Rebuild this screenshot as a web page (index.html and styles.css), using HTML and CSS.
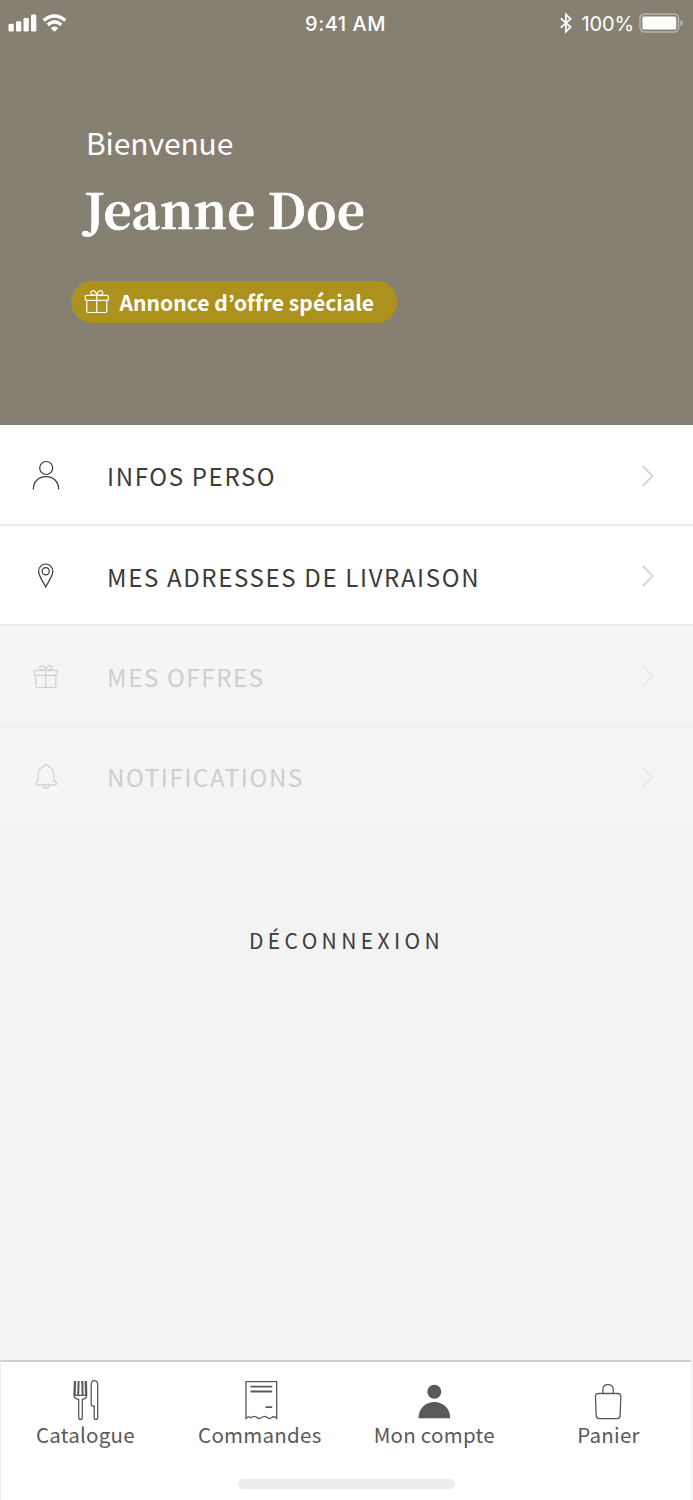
FILE: index.html
```html
<!DOCTYPE html>
<html lang="fr">
<head>
<meta charset="utf-8">
<title>Mon compte</title>
<link rel="stylesheet" href="styles.css">
</head>
<body>
<svg width="0" height="0" class="defs" aria-hidden="true">
  <symbol id="gift" viewBox="0 0 26 26">
    <rect x="1.3" y="6.4" width="23" height="5" rx="1.2"/>
    <path d="M2.8 11.4V22.3q0 1.2 1.2 1.2H21.6q1.2 0 1.2-1.2V11.4M12.8 6.4V23.5M12.8 6.2C10.6 6.5 7 6.2 6.7 3.9C6.6 2.2 8.4 1.2 10 1.9C11.7 2.6 12.5 4.5 12.8 6.2C13.1 4.5 13.9 2.6 15.6 1.9C17.2 1.2 19 2.2 18.9 3.9C18.6 6.2 15 6.5 12.8 6.2"/>
  </symbol>
  <symbol id="chevron" viewBox="0 0 14 24"><path d="M1.8 2L11.500 12L1.800 22"/></symbol>
</svg>
<main class="screen">
  <header class="hero">
    <div class="status">
      <div class="status-left">
        <svg width="60" height="20" viewBox="0 0 60 20" fill="#fff">
          <rect x="0.500" y="10.700" width="5.300" height="7.800" rx="1.300"/><rect x="8" y="8.200" width="5.300" height="10.300" rx="1.300"/><rect x="15.500" y="5" width="5.300" height="13.500" rx="1.300"/><rect x="23" y="1.500" width="5.300" height="17" rx="1.300"/>
          <g fill="none" stroke="#fff" stroke-width="3.500"><path d="M35.700 7.500Q46.500 -1.400 57.300 7.500"/><path d="M39.700 11.900Q46.500 5.900 53.300 11.900"/></g>
          <path d="M42.600 15Q46.500 11.800 50.400 15L46.500 18.700Z"/>
        </svg>
      </div>
      <div class="clock">9:41 AM</div>
      <div class="status-right">
        <svg width="14" height="22" viewBox="0 0 14 22" fill="none" stroke="#fff" stroke-width="1.700"><path d="M1.800 6.300L11.600 15L6.900 19.700V2.300L11.600 7L1.800 15.700"/></svg>
        <span class="percent">100%</span>
        <svg width="46" height="20" viewBox="0 0 46 20"><rect x="1" y="1" width="38.500" height="18" rx="4.800" fill="none" stroke="#b9b5ad" stroke-width="1.600"/><rect x="3.400" y="3.400" width="33.800" height="13.200" rx="1.600" fill="#fff"/><path d="M41.400 6.800Q44 7.800 44 10Q44 12.200 41.400 13.200Z" fill="#b9b5ad"/></svg>
      </div>
    </div>
    <div class="greeting">Bienvenue</div>
    <h1 class="name">Jeanne Doe</h1>
    <div class="pill"><svg class="pill-icon"><use href="#gift"/></svg><span>Annonce d’offre spéciale</span></div>
  </header>
  <nav class="menu">
    <a class="row">
      <svg class="row-icon" viewBox="0 0 30 32"><circle cx="15.200" cy="8" r="6.500"/><path d="M2.300 29.500C2.300 21.300 8 16.700 15 16.700S27.700 21.300 27.700 29.500"/></svg>
      <span class="label">INFOS PERSO</span><svg class="chevron"><use href="#chevron"/></svg>
    </a>
    <a class="row">
      <svg class="row-icon" viewBox="0 0 30 32"><path d="M14.700 27C12 21.500 7.600 16.500 7.600 11.100A7.100 7.100 0 0 1 21.800 11.100C21.800 16.500 17.400 21.500 14.700 27Z"/><circle cx="14.700" cy="11.300" r="3.600"/></svg>
      <span class="label">MES ADRESSES DE LIVRAISON</span><svg class="chevron"><use href="#chevron"/></svg>
    </a>
    <a class="row disabled">
      <svg class="row-icon gift-icon"><use href="#gift"/></svg>
      <span class="label">MES OFFRES</span><svg class="chevron"><use href="#chevron"/></svg>
    </a>
    <a class="row disabled">
      <svg class="row-icon" viewBox="0 0 30 32"><path d="M6.200 23.800H24Q25.700 23.800 25.700 22.500Q25.500 21.600 23.300 20L22.800 18.500V13Q22.500 7.200 17.200 5.500V5Q17 3.600 15 3.600T12.800 5V5.500Q7.500 7.200 7.200 13V18.500L6.700 20Q4.500 21.600 4.300 22.500Q4.300 23.800 6.200 23.800ZM12 24Q12 27.300 15 27.300T18 24"/></svg>
      <span class="label">NOTIFICATIONS</span><svg class="chevron"><use href="#chevron"/></svg>
    </a>
  </nav>
  <div class="logout">DÉCONNEXION</div>
  <footer class="tabbar">
    <div class="tabs">
      <a class="tab"><svg class="tab-icon" viewBox="0 0 40 44">
        <path d="M9.500 3L9 17Q9 20.800 13.700 21.400V39.500Q13.700 41.500 15.500 41.500T17.300 39.500V21.400Q21.700 20.800 21.700 17L21.300 3M9.300 17.300H21.500"/>
        <path class="tines" d="M10.200 3L9.700 17M13.600 3L13.200 17M17.300 3L17.600 17M20.600 3L21 17"/>
        <path d="M26.200 26.500V7Q26.200 2.700 29.500 2.700T32.700 7V39.500Q32.700 41.500 30.900 41.500T29.200 39.500V28.200Q26.200 28.200 26.200 26.500Z"/></svg><span>Catalogue</span></a>
      <a class="tab"><svg class="tab-icon" viewBox="0 0 40 44"><path d="M6 40.400V3.700H36.700V40.400Q34.100 37.500 31.500 39.800Q29 41.500 26.400 39Q23.900 37.500 21.400 39.800Q18.800 41.500 16.200 39Q13.700 37.500 11.100 39.800Q8.500 37.500 6 40.400Z"/><path class="thick" d="M10.500 8.600H32.200M10.500 13.500H32.200M25.500 29.100H32.200"/></svg><span>Commandes</span></a>
      <a class="tab"><svg class="tab-icon solid" viewBox="0 0 40 44"><circle cx="20.300" cy="13.700" r="7"/><path d="M4.500 40.300C4.500 30.500 11.500 24 20.300 24S36.200 30.500 36.200 40.300Z"/></svg><span>Mon compte</span></a>
      <a class="tab"><svg class="tab-icon" viewBox="0 0 40 44"><path d="M9.300 15.500H28.900Q31.900 15.500 31.800 18.500L31.100 37.500Q31 40.600 28 40.600H10.300Q7.300 40.600 7.200 37.500L6.500 18.500Q6.400 15.500 9.400 15.500M13.900 15.500V11.800Q13.900 6.700 19 6.700T24.300 11.800V15.500"/></svg><span>Panier</span></a>
    </div>
    <div class="home-indicator"></div>
  </footer>
</main>
</body>
</html>
```
FILE: styles.css
```css
* { box-sizing: border-box; }
body {
  margin: 0;
  font-family: "Noto Sans CJK KR", "Open Sans", sans-serif;
  background: #f3f3f3;
}
.defs { position: absolute; }
.screen { display: flex; flex-direction: column; width: 693px; height: 1500px; }
.hero {
  display: flex; flex-direction: column; align-items: flex-start;
  height: 425px; background: #868072; color: #fff; flex: none;
}
.status {
  display: grid; grid-template-columns: 1fr auto 1fr; align-items: center;
  width: 100%; height: 46px; padding: 0 8px;
  font-family: Inter, "Liberation Sans", sans-serif; font-size: 20px;
}
.status svg { display: block; }
.clock { font-weight: 500; letter-spacing: 0.5px; padding-top: 2px; margin-right: 2px; }
.status-right { display: flex; align-items: center; justify-content: flex-end; }
.percent { margin: 2px 5px 0 8px; letter-spacing: -0.1px; }
.greeting { margin: 76px 0 0 86px; font-size: 30px; line-height: 40px; letter-spacing: -0.1px; }
.name {
  margin: 16px 0 0 84px; font-family: "Noto Serif CJK SC", "Liberation Serif", serif;
  font-size: 48.5px; line-height: 60px; font-weight: 700; letter-spacing: 0.3px;
  -webkit-text-stroke: 0.7px #fff;
}
.pill {
  display: flex; align-items: center; width: 326px; height: 42px;
  margin: 43px 0 0 71px; padding-left: 12.5px; border-radius: 21px;
  background: #ac921c; font-size: 21px; font-weight: 700; letter-spacing: 0.06px; white-space: nowrap;
}
.pill-icon { width: 26px; height: 26px; margin-right: 10px; fill: none; stroke: #fff; stroke-width: 1.2; }
.menu { flex: none; padding-top: 0.7px; background: #fff; }
.row {
  display: flex; align-items: center; height: 100.3px; padding: 2px 38px 0 31px;
  border-bottom: 2px solid #ebebeb; background: #fff; color: #3b3b3a;
}
.row-icon { width: 30px; height: 32px; margin-right: 46px; fill: none; stroke: #3b3b3a; stroke-width: 1.2; }
.gift-icon { width: 26px; height: 26px; margin: 2px 48px 0 2px; }
.label { flex: 1; font-size: 24px; letter-spacing: 1.65px; white-space: nowrap; }
.chevron { width: 14px; height: 24px; fill: none; stroke: #d3d3d3; stroke-width: 1.8; }
.disabled { background: #f5f5f5; color: #cececd; border-color: #f0f0f0; }
.disabled .row-icon { stroke: #cececd; }
.disabled .chevron { stroke: #e9e9e9; }
.logout { margin-top: 93px; text-align: center; font-size: 21px; line-height: 40px; letter-spacing: 4.4px; color: #3b3b3a; }
.tabbar {
  display: flex; flex-direction: column; align-items: center;
  margin: auto 2px 0 0; height: 140px; border-top: 2px solid #cfcfcf; border-left: 1px solid #ececec;
  background: #fff; color: #595958;
}
.tabs { display: grid; grid-template-columns: repeat(4, 174.4px); padding: 16px 0 0 2px; }
.tab { display: flex; flex-direction: column; align-items: center; font-size: 20.5px; line-height: 24px; letter-spacing: 0.25px; }
.tab-icon { width: 40px; height: 44px; fill: none; stroke: #595958; stroke-width: 1.3; }
.tines { stroke-width: 2; }
.thick { stroke-width: 1.8; }
.solid { fill: #595958; stroke: none; }
.home-indicator { width: 217px; height: 10px; margin-top: 33px; border-radius: 5px; background: #ededed; }
```
